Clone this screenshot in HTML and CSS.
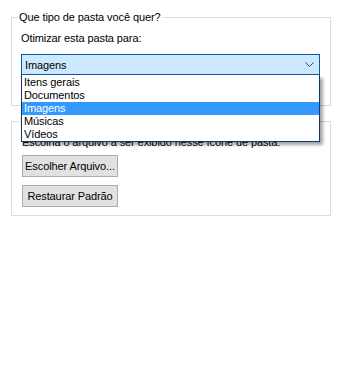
FILE: index.html
```html
<!DOCTYPE html>
<html lang="pt-BR">
<head>
  <meta charset="UTF-8" />
  <meta name="viewport" content="width=device-width, initial-scale=1.0"/>
  <title>Personalizar pasta</title>
  <link rel="stylesheet" href="styles.css">
</head>
<body>

  <fieldset class="group group-type">
    <legend>Que tipo de pasta você quer?</legend>
    <div class="field-label">Otimizar esta pasta para:</div>

    <div class="combo">
      <div class="combo-box">
        <span>Imagens</span>
        <svg class="chevron" width="9" height="5" viewBox="0 0 9 5">
          <polyline points="0.5,0.5 4.5,4.5 8.5,0.5" fill="none" stroke="#444" stroke-width="1"/>
        </svg>
      </div>
      <ul class="combo-list">
        <li>Itens gerais</li>
        <li>Documentos</li>
        <li class="selected">Imagens</li>
        <li>Músicas</li>
        <li>Vídeos</li>
      </ul>
    </div>
  </fieldset>

  <fieldset class="group group-pictures">
    <legend>Imagens de pasta</legend>
    <div class="field-label">Escolha o arquivo a ser exibido nesse ícone de pasta:</div>
    <button class="btn">Escolher Arquivo...</button>
    <button class="btn">Restaurar Padrão</button>
  </fieldset>

</body>
</html>
```

FILE: styles.css
```css
* { box-sizing: border-box; }
body {
  font-family: 'Liberation Sans', Arial, sans-serif;
  font-size: 11px;
  letter-spacing: -0.1px;
  line-height: 14px;
  color: #000;
  margin: 0;
  background: #fff;
}
.group {
  width: 320px;
  margin: 0 0 0 11px;
  border: 1px solid #dcdcdc;
  min-width: 0;
}
.group legend {
  padding: 0 1px;
  margin-left: -3px;
  line-height: 14px;
}
.group-type {
  margin-top: 10px;
  padding: 0 9px 30px 9px;
}
.group-pictures {
  margin-top: 8px;
  padding: 0 10px 8px 10px;
}
.group-type .field-label {
  margin-top: 7px;
}
.group-pictures .field-label {
  margin-top: 7px;
}
.combo {
  position: relative;
  margin-top: 9px;
  width: 299px;
}
.combo-box {
  height: 21px;
  background: #cce8ff;
  border: 1px solid #0a5aa6;
  display: flex;
  align-items: center;
  justify-content: space-between;
  padding: 0 5px 0 3px;
}
.chevron {
  display: block;
}
.combo-list {
  position: absolute;
  top: 100%;
  left: 0;
  width: 299px;
  margin: 0;
  padding: 1px 0 0 0;
  list-style: none;
  background: #fff;
  border: 1px solid #103a6b;
  border-top: none;
  box-shadow: 3px 3px 3px rgba(0,0,0,0.35);
  z-index: 2;
}
.combo-list li {
  height: 13px;
  line-height: 13px;
  padding-left: 2px;
}
.combo-list li.selected {
  background: #3399ff;
  color: #fff;
}
.btn {
  display: block;
  width: 96px;
  height: 22px;
  padding: 0;
  font-family: inherit;
  font-size: 11px;
  letter-spacing: -0.1px;
  white-space: nowrap;
  color: #000;
  background: #e1e1e1;
  border: 1px solid #adadad;
  border-radius: 0;
}
.group-pictures .btn:first-of-type {
  margin-top: 6px;
}
.btn + .btn {
  margin-top: 8px;
}
```
